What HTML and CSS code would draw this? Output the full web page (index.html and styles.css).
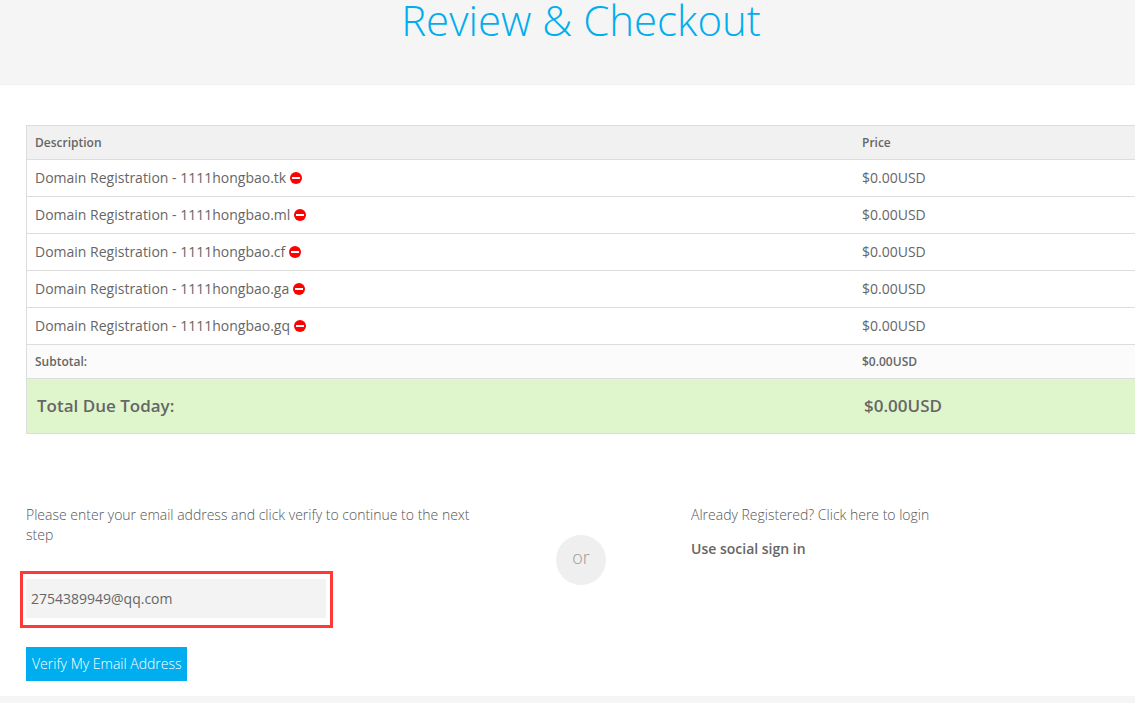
FILE: index.html
```html
<!DOCTYPE html>
<html lang="en">
<head>
<meta charset="utf-8">
<meta name="viewport" content="width=device-width, initial-scale=1">
<title>Review &amp; Checkout</title>
<link rel="stylesheet" href="styles.css">
</head>
<body>
<svg class="symbols" width="0" height="0" aria-hidden="true">
  <symbol id="minus-circle" viewBox="0 0 12 12">
    <circle cx="6" cy="6" r="6" fill="#f00"/>
    <rect x="2" y="5" width="8" height="2" fill="#fff"/>
  </symbol>
</svg>
<header class="banner"><h1 class="banner-title">Review &amp; Checkout</h1></header>
<main>
  <div class="summary">
    <table class="cart">
      <thead>
        <tr><th scope="col">Description</th><th scope="col" class="price">Price</th></tr>
      </thead>
      <tbody>
        <tr><td>Domain Registration - 1111hongbao.tk <button class="remove" type="button" aria-label="Remove 1111hongbao.tk"><svg class="remove-icon"><use href="#minus-circle"/></svg></button></td><td>$0.00USD</td></tr>
        <tr><td>Domain Registration - 1111hongbao.ml <button class="remove" type="button" aria-label="Remove 1111hongbao.ml"><svg class="remove-icon"><use href="#minus-circle"/></svg></button></td><td>$0.00USD</td></tr>
        <tr><td>Domain Registration - 1111hongbao.cf <button class="remove" type="button" aria-label="Remove 1111hongbao.cf"><svg class="remove-icon"><use href="#minus-circle"/></svg></button></td><td>$0.00USD</td></tr>
        <tr><td>Domain Registration - 1111hongbao.ga <button class="remove" type="button" aria-label="Remove 1111hongbao.ga"><svg class="remove-icon"><use href="#minus-circle"/></svg></button></td><td>$0.00USD</td></tr>
        <tr><td>Domain Registration - 1111hongbao.gq <button class="remove" type="button" aria-label="Remove 1111hongbao.gq"><svg class="remove-icon"><use href="#minus-circle"/></svg></button></td><td>$0.00USD</td></tr>
      </tbody>
      <tfoot>
        <tr class="subtotal"><td>Subtotal:</td><td>$0.00USD</td></tr>
        <tr class="total"><td>Total Due Today:</td><td>$0.00USD</td></tr>
      </tfoot>
    </table>
  </div>
  <div class="account">
    <form class="verify">
      <label class="lead" for="email">Please enter your email address and click verify to continue to the next step</label>
      <div class="highlight"><input class="email" id="email" type="email" value="2754389949@qq.com"></div>
      <button class="submit" type="button">Verify My Email Address</button>
    </form>
    <div class="divider"><span class="or">or</span></div>
    <section class="login">
      <a class="lead" href="#login">Already Registered? Click here to login</a>
      <h2 class="social">Use social sign in</h2>
    </section>
  </div>
</main>
<footer class="footer"></footer>
</body>
</html>
```
FILE: styles.css
```css
* { box-sizing: border-box; }
html, body { height: 100%; }
body {
  margin: 0;
  display: flex;
  flex-direction: column;
  background: #fff;
  color: #666;
  font: 400 14px/20px "Open Sans", "Noto Sans", sans-serif;
}
.symbols { position: absolute; }
.banner {
  padding: 0 0 44px 27px;
  background: #f5f5f5;
  border-bottom: 1px solid #f1f1f1;
  text-align: center;
}
.banner-title {
  margin: 0;
  color: #00aeef;
  font-size: 42px;
  line-height: 40px;
  font-weight: 300;
}
.summary { padding: 40px 0 0 26px; }
.cart {
  width: 100%;
  table-layout: fixed;
  border-collapse: separate;
  border-spacing: 0;
  border: 1px solid #ddd;
  border-width: 1px 0 0 1px;
}
.cart th, .cart td {
  padding: 8px;
  border-bottom: 1px solid #ddd;
  text-align: left;
}
.cart th {
  background: #f1f1f1;
  font-size: 12px;
  line-height: 17px;
  font-weight: 600;
}
.cart .price { width: 281px; }
.cart .subtotal td {
  background: #fbfbfb;
  font-size: 12px;
  line-height: 17px;
  font-weight: 600;
}
.cart .total td {
  padding: 15px 10px;
  background: #dff6cd;
  font-size: 17px;
  line-height: 24px;
  font-weight: 600;
}
.remove {
  padding: 0;
  border: 0;
  background: none;
  vertical-align: -1px;
  line-height: 0;
}
.remove-icon { width: 12px; height: 12px; }
.account {
  display: grid;
  grid-template-columns: 475fr 190fr 459fr;
  padding: 71px 0 15px 11px;
}
.verify, .login { padding: 0 15px; }
.lead {
  display: block;
  color: #555;
  font-weight: 300;
  text-decoration: none;
}
.highlight {
  width: 313px;
  margin: 26px 0 19px -6px;
  padding: 5px 4px 7px 3px;
  border: 3px solid #ff3838;
}
.email {
  display: block;
  width: 100%;
  height: 39px;
  padding: 0 5px;
  border: 0;
  background: #f3f3f3;
  color: #666;
  font: inherit;
}
.submit {
  display: block;
  padding: 7px 5px 7px 6px;
  border: 0;
  background: #00aeef;
  color: #fff;
  font: inherit;
  font-weight: 300;
}
.divider {
  display: flex;
  justify-content: center;
  padding-top: 30px;
}
.or {
  width: 50px;
  height: 50px;
  border-radius: 50%;
  background: #efefef;
  color: #999;
  font-size: 18px;
  line-height: 44px;
  font-weight: 300;
  text-align: center;
}
.social {
  margin: 14px 0 0;
  font-size: 14px;
  line-height: 20px;
  font-weight: 600;
}
.footer {
  flex: 1;
  background: #f5f5f5;
}
```
